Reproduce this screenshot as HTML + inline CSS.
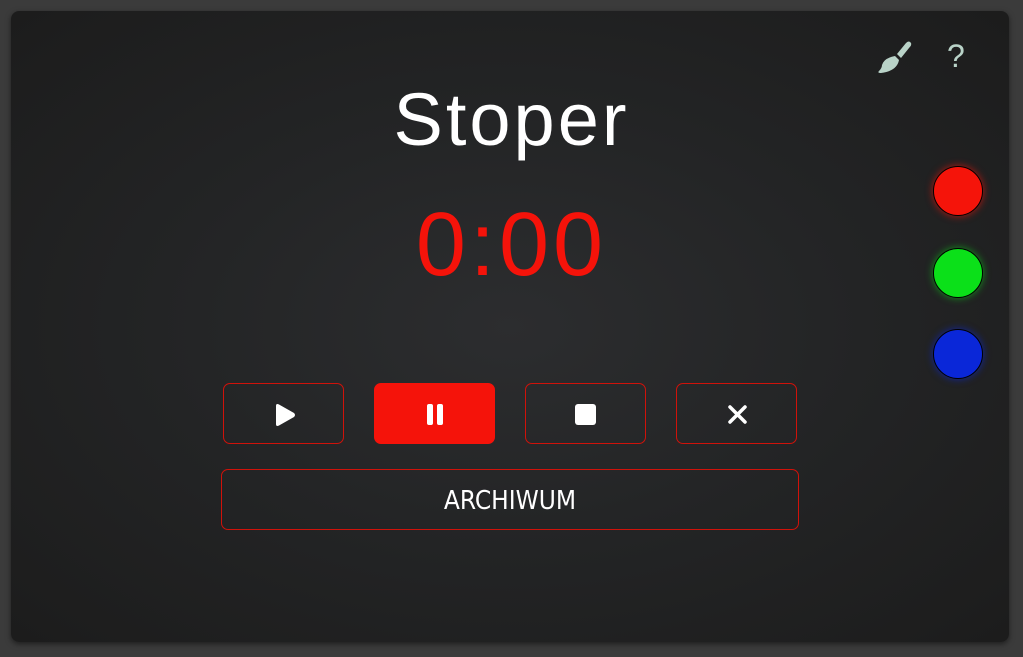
<!DOCTYPE html>
<html><head><meta charset="utf-8"><style>
html,body{margin:0;padding:0;width:1023px;height:657px;background:#3b3b3b;overflow:hidden;font-family:"Liberation Sans",sans-serif}
.panel{position:absolute;left:11px;top:11px;width:998px;height:631px;border-radius:8px;background:radial-gradient(ellipse at 50% 50%,#2c2d2f 0%,#232425 50%,#1c1c1c 100%);box-shadow:0 2px 6px rgba(0,0,0,.5)}
.t{position:absolute;left:0;width:1023px;text-align:center}
.title{top:80px;font-size:74px;color:#fff;letter-spacing:3px;line-height:80px}
.time{top:200px;font-size:90px;color:#f5130a;letter-spacing:4px;line-height:90px}
.b{position:absolute;top:383px;width:119px;height:59px;border:1px solid #d0120a;border-radius:7px;box-sizing:content-box}
.arch{position:absolute;left:221px;top:469px;width:576px;height:59px;border:1px solid #d0120a;border-radius:7px;color:#fff;font-size:26px;text-align:center;line-height:62px;font-family:"DejaVu Sans Condensed","Liberation Sans",sans-serif}
.c{position:absolute;left:933px;width:48px;height:48px;border-radius:50%;border:1px solid #000}
svg{position:absolute}
</style></head><body>
<div class="panel"></div>
<svg style="left:876px;top:40px" width="36" height="34" viewBox="0 0 36 34"><path d="M21 14 L30 3 Q33 0 35 3 Q36 5 33 8 L25 18 Z" fill="#b9d3c8"/><path d="M19 16 L23 20 Q21 31 5 33 Q1 33 3 31 Q6 28 6 25 Q8 18 19 16Z" fill="#b9d3c8"/></svg>
<div style="position:absolute;left:947px;top:38px;font-size:32px;color:#b9d3c8">?</div>
<div class="t title">Stoper</div>
<div class="t time">0:00</div>
<div class="b" style="left:223px"><svg style="left:50px;top:19px" width="22" height="24"><path d="M2 3 Q2 0 5 1.5 L20 10 Q22 12 20 14 L5 22.5 Q2 24 2 21Z" fill="#fff"/></svg></div>
<div class="b" style="left:374px;background:#f5130a;border-color:#f5130a"><svg style="left:51px;top:20px" width="20" height="22"><rect x="1" y="0" width="6" height="21" rx="2" fill="#fff"/><rect x="11" y="0" width="6" height="21" rx="2" fill="#fff"/></svg></div>
<div class="b" style="left:525px"><svg style="left:49px;top:20px" width="22" height="22"><rect x="0" y="0" width="21" height="21" rx="3" fill="#fff"/></svg></div>
<div class="b" style="left:676px"><svg style="left:51px;top:21px" width="20" height="20"><path d="M2 2 L17 17 M17 2 L2 17" stroke="#fff" stroke-width="3.5" stroke-linecap="round"/></svg></div>
<div class="arch">ARCHIWUM</div>
<div class="c" style="top:166px;background:#f5140a;box-shadow:0 0 8px rgba(245,20,10,.7)"></div>
<div class="c" style="top:248px;background:#0be019;box-shadow:0 0 8px rgba(11,224,25,.6)"></div>
<div class="c" style="top:329px;background:#0a27d8;box-shadow:0 0 8px rgba(10,39,216,.7)"></div>
</body></html>
